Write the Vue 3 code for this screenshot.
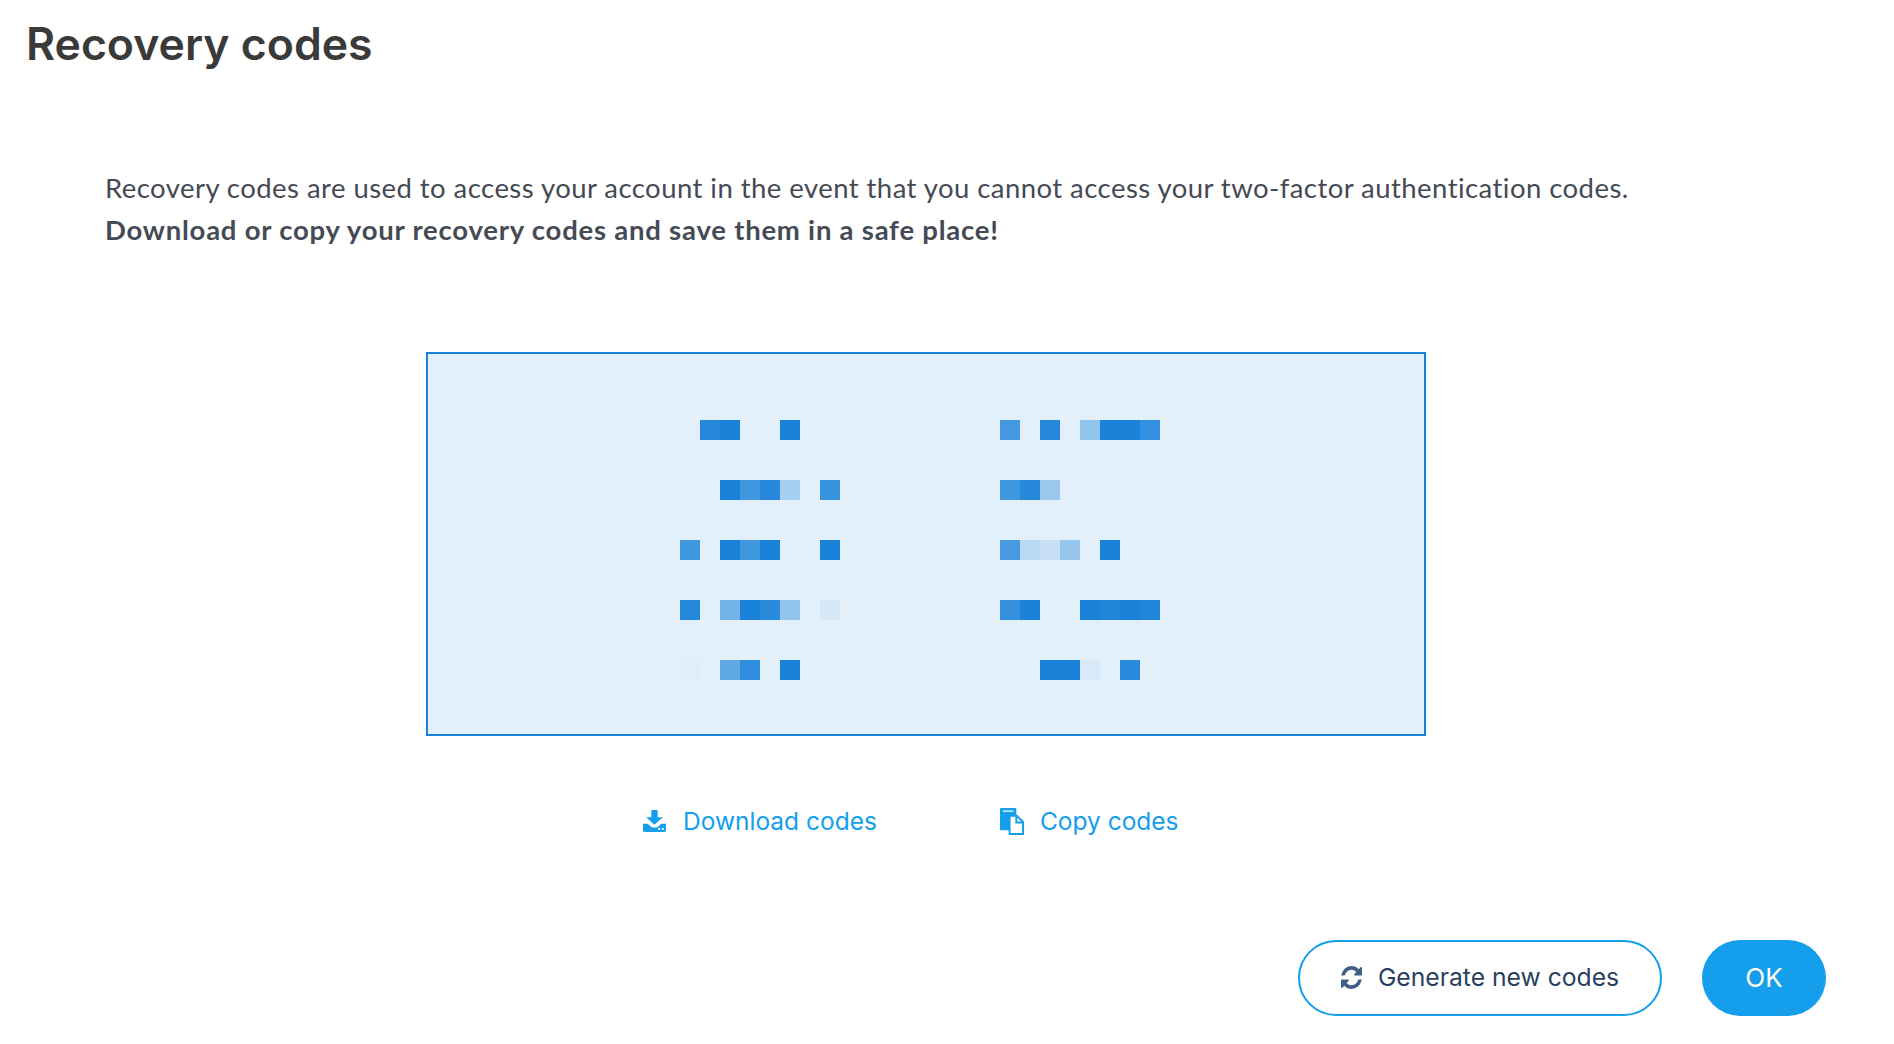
<script setup>
const leftRows = [
  [[1, 0.95], [2, 1], [5, 1]],
  [[2, 1], [3, 0.82], [4, 0.95], [5, 0.3], [7, 0.85]],
  [[0, 0.82], [2, 1], [3, 0.82], [4, 1], [7, 1]],
  [[0, 0.95], [2, 0.55], [3, 1], [4, 0.92], [5, 0.4], [7, 0.07]],
  [[0, 0.02], [2, 0.65], [3, 0.9], [5, 1]],
];
const rightRows = [
  [[0, 0.8], [2, 0.95], [4, 0.4], [5, 1], [6, 1], [7, 0.88]],
  [[0, 0.82], [1, 0.95], [2, 0.37]],
  [[0, 0.78], [1, 0.2], [2, 0.14], [3, 0.38], [5, 1]],
  [[0, 0.87], [1, 1], [4, 1], [5, 0.97], [6, 1], [7, 0.97]],
  [[2, 1], [3, 1], [4, 0.05], [6, 0.92]],
];

function cells(row) {
  const out = Array(8).fill(0);
  row.forEach(([i, alpha]) => {
    out[i] = alpha;
  });
  return out;
}
</script>

<template>
  <div class="page">
    <h1>Recovery codes</h1>

    <p class="intro">
      Recovery codes are used to access your account in the event that you cannot access your two-factor authentication codes.<br />
      <strong>Download or copy your recovery codes and save them in a safe place!</strong>
    </p>

    <div class="codes">
      <div class="code-col">
        <div v-for="(row, r) in leftRows" :key="r" class="code-row">
          <span v-for="(a, i) in cells(row)" :key="i" class="pixel" :style="{ opacity: a }"></span>
        </div>
      </div>
      <div class="code-col">
        <div v-for="(row, r) in rightRows" :key="r" class="code-row">
          <span v-for="(a, i) in cells(row)" :key="i" class="pixel" :style="{ opacity: a }"></span>
        </div>
      </div>
    </div>

    <div class="links">
      <a class="link link-download">
        <svg width="23" height="22" viewBox="0 0 22 24" preserveAspectRatio="none" fill="#149eec">
          <path d="M8 0h6v8h5l-8 8-8-8h5z" />
          <path fill-rule="evenodd" d="M0 15h4.500l4 4h5l4-4H22v7a2 2 0 0 1-2 2H2a2 2 0 0 1-2-2zM14.500 19.500h2v2h-2zM18 19.500h2v2h-2z" />
        </svg>
        Download codes
      </a>
      <a class="link link-copy">
        <svg width="24" height="27" viewBox="0 0 25 28" preserveAspectRatio="none">
          <path fill="#149eec" fill-rule="evenodd" d="M1 0h15a1 1 0 0 1 1 1v21a1 1 0 0 1-1 1H1a1 1 0 0 1-1-1V1a1 1 0 0 1 1-1zM3 2.500V4h11V2.500z" />
          <path fill="#fff" stroke="#149eec" stroke-width="2" d="M10 8h7.500l6.500 6.500V27H10z" />
          <path fill="none" stroke="#149eec" stroke-width="2" d="M17 8v7h7" />
        </svg>
        Copy codes
      </a>
    </div>

    <div class="actions">
      <button class="btn btn-outline">
        <svg class="refresh" width="21" height="23" viewBox="128 128 1536 1536" preserveAspectRatio="none" fill="#3f5f86">
          <path d="M1639 1056q0 5-1 7-64 268-268 434.500t-478 166.500q-146 0-282.500-55t-243.500-157l-129 129q-19 19-45 19t-45-19-19-45v-448q0-26 19-45t45-19h448q26 0 45 19t19 45-19 45l-137 137q71 66 161 102t187 36q134 0 250-65t186-179q11-17 53-117 8-23 30-23h192q13 0 22.500 9.500t9.500 22.500zm25-800v448q0 26-19 45t-45 19h-448q-26 0-45-19t-19-45 19-45l138-138q-148-137-349-137-134 0-250 65t-186 179q-11 17-53 117-8 23-30 23h-199q-13 0-22.500-9.500t-9.500-22.500v-7q65-268 270-434.500t480-166.500q146 0 284 55.500t245 156.500l130-129q19-19 45-19t45 19 19 45z" />
        </svg>
        Generate new codes
      </button>
      <button class="btn btn-primary">OK</button>
    </div>
  </div>
</template>

<style scoped>
.page {
  width: 1894px;
  height: 1044px;
  box-sizing: border-box;
  padding: 19px 0 0 26px;
  background: #fff;
  font-family: "Inter", "Open Sans", sans-serif;
  overflow: hidden;
}

h1 {
  margin: 0;
  font-size: 44.6px;
  line-height: 50px;
  font-weight: 600;
  color: #3a3a3a;
}

.intro {
  margin: 98px 0 0 79px;
  font-family: "Lato", sans-serif;
  font-size: 27.5px;
  letter-spacing: 0.45px;
  line-height: 42px;
  color: #454a54;
}

.intro strong {
  font-weight: 700;
  letter-spacing: 0.77px;
}

.codes {
  width: 1000px;
  height: 384px;
  box-sizing: border-box;
  margin: 101px 0 0 400px;
  padding: 66px 0 0 252px;
  display: flex;
  gap: 160px;
  background: #e3f0fa;
  border: 2px solid #1a82d9;
}

.code-col {
  display: flex;
  flex-direction: column;
  gap: 40px;
}

.code-row {
  display: flex;
  height: 20px;
}

.pixel {
  width: 20px;
  height: 20px;
  background: #1a82d9;
}

.links {
  display: flex;
  margin: 67px 0 0 617px;
  gap: 123px;
}

.link {
  display: flex;
  align-items: center;
  font-size: 24.5px;
  line-height: 36px;
  color: #149eec;
  cursor: pointer;
}

.link-download {
  gap: 17px;
}

.link-copy {
  gap: 16px;
}

.actions {
  display: flex;
  justify-content: flex-end;
  gap: 40px;
  margin: 101px 0 0;
  padding-right: 68px;
}

.btn {
  height: 76px;
  border-radius: 38px;
  font-family: inherit;
  font-size: 24.7px;
  cursor: pointer;
}

.btn-outline {
  width: 364px;
  display: flex;
  align-items: center;
  justify-content: center;
  gap: 16px;
  padding: 0 0 2px;
  background: #fff;
  border: 2px solid #149eec;
  color: #2a3f5f;
}

.btn-primary {
  width: 124px;
  padding: 0 0 2px;
  background: #149eec;
  border: none;
  color: #fff;
  font-size: 26px;
}
</style>
